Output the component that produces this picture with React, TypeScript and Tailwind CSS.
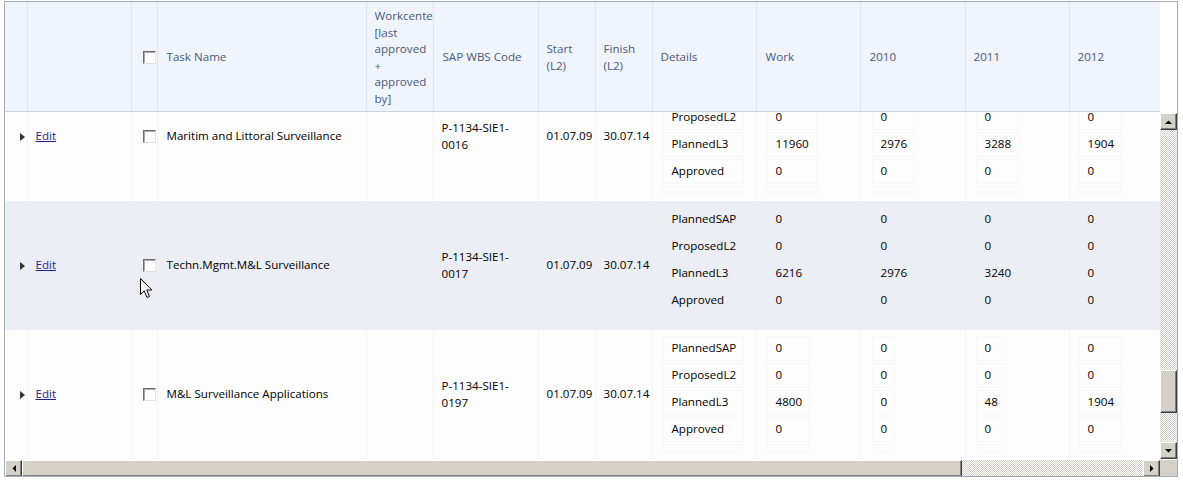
import React from "react";

const COLS = [22, 104, 26, 209, 67, 105, 57, 57, 104, 104, 105, 104, 91];

type Row = {
  name: string;
  wbs1: string;
  wbs2: string;
  start: string;
  finish: string;
  work: string[];
  y2010: string[];
  y2011: string[];
  y2012: string[];
  gray: boolean;
};

const LABELS = ["PlannedSAP", "ProposedL2", "PlannedL3", "Approved"];

const ROWS: Row[] = [
  {
    name: "Maritim and Littoral Surveillance",
    wbs1: "P-1134-SIE1-",
    wbs2: "0016",
    start: "01.07.09",
    finish: "30.07.14",
    work: ["0", "0", "11960", "0"],
    y2010: ["0", "0", "2976", "0"],
    y2011: ["0", "0", "3288", "0"],
    y2012: ["0", "0", "1904", "0"],
    gray: false,
  },
  {
    name: "Techn.Mgmt.M&L Surveillance",
    wbs1: "P-1134-SIE1-",
    wbs2: "0017",
    start: "01.07.09",
    finish: "30.07.14",
    work: ["0", "0", "6216", "0"],
    y2010: ["0", "0", "2976", "0"],
    y2011: ["0", "0", "3240", "0"],
    y2012: ["0", "0", "0", "0"],
    gray: true,
  },
  {
    name: "M&L Surveillance Applications",
    wbs1: "P-1134-SIE1-",
    wbs2: "0197",
    start: "01.07.09",
    finish: "30.07.14",
    work: ["0", "0", "4800", "0"],
    y2010: ["0", "0", "0", "0"],
    y2011: ["0", "0", "48", "0"],
    y2012: ["0", "0", "1904", "0"],
    gray: false,
  },
];

function Colgroup() {
  return (
    <colgroup>
      {COLS.map((w, i) => (
        <col key={i} style={{ width: w }} />
      ))}
    </colgroup>
  );
}

function Checkbox() {
  return (
    <span className="block w-[13px] h-[13px] bg-white border border-t-[#6f6f6f] border-l-[#6f6f6f] border-b-[#e2e2e2] border-r-[#e2e2e2] shadow-[inset_1px_1px_#a9a9a9]" />
  );
}

function Stack({ items, gray }: { items: string[]; gray: boolean }) {
  const b = gray ? "border-transparent" : "border-[#f7f7f7]";
  return (
    <div className="grid w-fit gap-[2px] ml-[2px]">
      {items.map((v, i) => (
        <div
          key={i}
          className={`h-[25px] border ${b} pl-[8px] pr-[7px] flex items-center whitespace-nowrap`}
        >
          {v}
        </div>
      ))}
      <div className={`h-[8px] border ${b}`} />
    </div>
  );
}

function ArrowBtn({ dir }: { dir: "up" | "down" | "left" | "right" }) {
  const pts = {
    up: "0,4 7,4 3.5,0.5",
    down: "0,0 7,0 3.5,3.5",
    left: "4,0 4,7 0.5,3.5",
    right: "0,0 0,7 3.5,3.5",
  }[dir];
  const vertical = dir === "up" || dir === "down";
  return (
    <div className="w-[17px] h-[17px] shrink-0 bg-[#d4d0c8] border border-t-white border-l-white border-b-[#404040] border-r-[#404040] shadow-[inset_-1px_-1px_#808080] flex items-center justify-center">
      <svg width={vertical ? 7 : 4} height={vertical ? 4 : 7} viewBox={vertical ? "0 0 7 4" : "0 0 4 7"}>
        <polygon points={pts} fill="#000" />
      </svg>
    </div>
  );
}

function Thumb({ className }: { className: string }) {
  return (
    <div
      className={`${className} shrink-0 bg-[#d4d0c8] border border-t-white border-l-white border-b-[#404040] border-r-[#404040] shadow-[inset_-1px_-1px_#808080]`}
    />
  );
}

const checker =
  "bg-[image:repeating-conic-gradient(#d4d0c8_0_25%,#ffffff_0_50%)] bg-[length:2px_2px]";

export default function App() {
  const th =
    "border-r border-[#dfe4ee] bg-[#f0f4fc] text-left align-middle font-normal text-[#4b5a7c] p-0 pt-[2px]";
  return (
    <div className="w-[1183px] h-[482px] bg-white relative font-['Open_Sans','Noto_Sans',sans-serif] text-[11.6px] leading-[16.5px] text-black">
      <div className="ml-[4px] mt-[1px] w-[1174px] h-[476px] border border-[#a3abb6] flex flex-col overflow-hidden">
        {/* Header */}
        <div className="flex h-[110px] shrink-0">
          <div className="w-[1155px] h-[110px] border-b border-[#c9d2e2] bg-[#f0f4fc]">
            <table className="table-fixed border-collapse w-[1155px] h-[109px]">
              <Colgroup />
              <thead>
                <tr>
                  <th className={th}></th>
                  <th className={th}></th>
                  <th className={`${th} pl-[11px]`}>
                    <Checkbox />
                  </th>
                  <th className={`${th} pl-[9px]`}>Task Name</th>
                  <th className={`${th} pl-[8px]`}>
                    <div className="overflow-hidden">Workcenter [last approved + approved by]</div>
                  </th>
                  <th className={`${th} pl-[9px]`}>SAP WBS Code</th>
                  <th className={`${th} pl-[8px]`}>Start (L2)</th>
                  <th className={`${th} pl-[8px]`}>Finish (L2)</th>
                  <th className={`${th} pl-[8px]`}>Details</th>
                  <th className={`${th} pl-[9px]`}>Work</th>
                  <th className={`${th} pl-[9px]`}>2010</th>
                  <th className={`${th} pl-[8px]`}>2011</th>
                  <th className={`${th} pl-[8px] border-r-0`}>2012</th>
                </tr>
              </thead>
            </table>
          </div>
          <div className="w-[17px] bg-white" />
        </div>

        {/* Body */}
        <div className="flex h-[348px] shrink-0">
          <div className="w-[1155px] h-[348px] overflow-hidden">
            <table className="table-fixed border-collapse w-[1155px] mt-[-40px]">
              <Colgroup />
              <tbody>
                {ROWS.map((r, i) => {
                  const bg = r.gray ? "bg-[#ebeef4]" : "bg-[#fdfdfd]";
                  const td = `border-r ${r.gray ? "border-[#ebeef4]" : "border-[#f4f4f4]"} align-middle p-0`;
                  return (
                    <tr key={i} className={bg}>
                      <td className={`${td} pl-[15px]`}>
                        <svg width="5" height="8" viewBox="0 0 5 8" className="block">
                          <polygon points="0,0 0,8 5,4" fill="#333" />
                        </svg>
                      </td>
                      <td className={`${td} pl-[8px]`}>
                        <a href="#" className="text-[#2b1d8f] underline">
                          Edit
                        </a>
                      </td>
                      <td className={`${td} pl-[11px]`}>
                        <Checkbox />
                      </td>
                      <td className={`${td} pl-[9px] whitespace-nowrap`}>{r.name}</td>
                      <td className={td}></td>
                      <td className={`${td} pl-[8px]`}>
                        <span className="block">{r.wbs1}</span>
                        <span className="block">{r.wbs2}</span>
                      </td>
                      <td className={`${td} pl-[8px]`}>{r.start}</td>
                      <td className={`${td} pl-[8px]`}>{r.finish}</td>
                      <td className={`${td} pl-[8px] pt-[6px] pb-[7px]`}>
                        <Stack items={LABELS} gray={r.gray} />
                      </td>
                      <td className={`${td} pl-[8px] pt-[6px] pb-[7px]`}>
                        <Stack items={r.work} gray={r.gray} />
                      </td>
                      <td className={`${td} pl-[9px] pt-[6px] pb-[7px]`}>
                        <Stack items={r.y2010} gray={r.gray} />
                      </td>
                      <td className={`${td} pl-[8px] pt-[6px] pb-[7px]`}>
                        <Stack items={r.y2011} gray={r.gray} />
                      </td>
                      <td className={`${td} pl-[7px] pt-[6px] pb-[7px] border-r-0`}>
                        <Stack items={r.y2012} gray={r.gray} />
                      </td>
                    </tr>
                  );
                })}
              </tbody>
            </table>
          </div>
          {/* Vertical scrollbar */}
          <div className="w-[17px] h-[348px] flex flex-col">
            <div className="h-[1px] bg-white" />
            <ArrowBtn dir="up" />
            <div className={`h-[240px] ${checker}`} />
            <Thumb className="h-[43px] w-[17px]" />
            <div className={`flex-1 ${checker}`} />
            <ArrowBtn dir="down" />
            <div className="h-[1px] bg-white" />
          </div>
        </div>

        {/* Horizontal scrollbar */}
        <div className="flex h-[17px] shrink-0">
          <div className="w-[1155px] flex">
            <ArrowBtn dir="left" />
            <Thumb className="w-[940px] h-[17px]" />
            <div className={`flex-1 ${checker}`} />
            <ArrowBtn dir="right" />
          </div>
          <div className="w-[17px] bg-[#d4d0c8]" />
        </div>
      </div>

      {/* Mouse cursor */}
      <svg
        className="absolute left-[140px] top-[277px]"
        width="13"
        height="21"
        viewBox="0 0 13 21"
      >
        <path
          d="M0.5 0.5 L0.5 16.5 L4.3 12.9 L7 19.5 L9.4 18.5 L6.8 12 L11.8 12 Z"
          fill="#fff"
          stroke="#000"
          strokeWidth="1"
          strokeLinejoin="miter"
        />
      </svg>
    </div>
  );
}
